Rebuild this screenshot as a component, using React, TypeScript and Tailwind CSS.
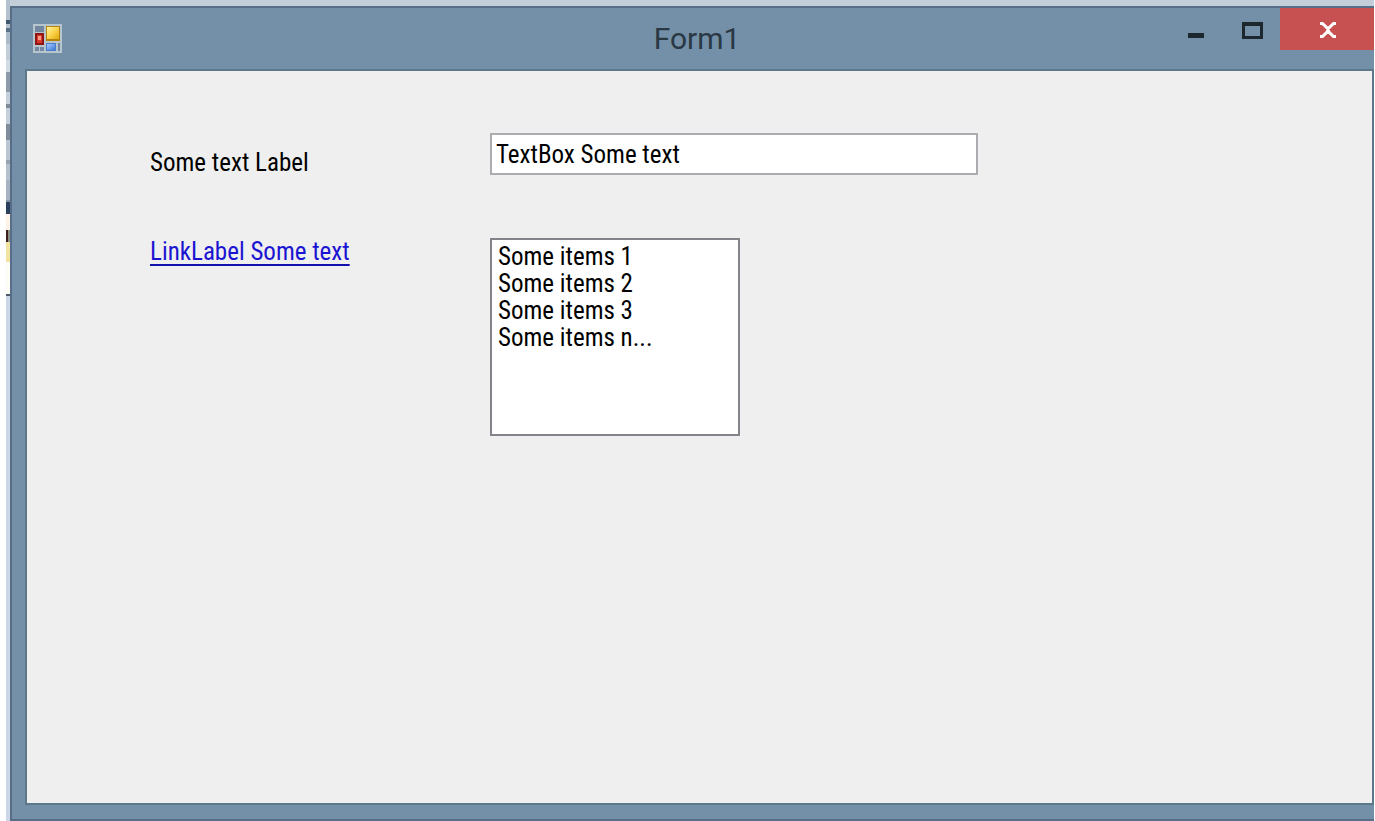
const items = ["Some items 1", "Some items 2", "Some items 3", "Some items n..."];

function BackgroundSliver() {
  return (
    <div aria-hidden="true" className="flex w-1 shrink-0 flex-col bg-[#cbd7e6]">
      <div className="h-5 bg-[#b4c2cf]" />
      <div className="h-1 bg-[#3f566c]" />
      <div className="h-1 bg-[#b4c2cf]" />
      <div className="h-1 bg-[#5b7186]" />
      <div className="h-3 bg-[#a9bac8]" />
      <div className="h-4 bg-[#c3ced9]" />
      <div className="h-3 bg-[#d2dae3]" />
      <div className="h-5 bg-[#8d9aaa]" />
      <div className="h-3 bg-[#c6cfda]" />
      <div className="h-1 bg-[#7f8b9a]" />
      <div className="h-4 bg-[#c6cfda]" />
      <div className="h-4 bg-[#7f8c9c]" />
      <div className="h-5 bg-[#bcc6d2]" />
      <div className="h-1 bg-[#98a3b1]" />
      <div className="h-4 bg-[#b5c0cd]" />
      <div className="h-5 bg-[#a7b3c2]" />
      <div className="h-[2px] bg-[#8894a6]" />
      <div className="h-3 bg-[#2b3f5f]" />
      <div className="h-4 bg-[#fdf3e6]" />
      <div className="flex h-3 bg-[#8a8f84]">
        <div className="w-[2px] bg-[#3a1d1c]" />
      </div>
      <div className="h-5 bg-[#f3e3a1]" />
      <div className="h-8 bg-[#fdfdf6]" />
      <div className="h-[2px] bg-[#4b5866]" />
    </div>
  );
}

function FormIcon() {
  return (
    <svg viewBox="0 0 29 29" className="size-[29px] shrink-0" aria-hidden="true">
      <defs>
        <linearGradient id="yellow" x1="0" y1="0" x2="1" y2="1">
          <stop offset="0" stopColor="#fff3a0" />
          <stop offset="0.5" stopColor="#fad44b" />
          <stop offset="1" stopColor="#e0a80c" />
        </linearGradient>
        <linearGradient id="blue" x1="0" y1="0" x2="1" y2="1">
          <stop offset="0" stopColor="#a6ccff" />
          <stop offset="1" stopColor="#3d78d8" />
        </linearGradient>
      </defs>
      <rect width="29" height="29" fill="#b7c6cc" />
      <rect x="2" y="2" width="9" height="6" fill="#7388a0" />
      <rect x="2" y="9" width="9" height="12" fill="#8f1414" />
      <rect x="4" y="11" width="5" height="8" fill="#d93a2c" />
      <rect x="5" y="12" width="3" height="4" fill="#ff9c84" />
      <rect x="2" y="23" width="4" height="4" fill="#7388a0" />
      <rect x="7" y="23" width="4" height="4" fill="#7388a0" />
      <rect x="13" y="2" width="14" height="15" fill="#b5830f" />
      <rect x="14" y="3" width="12" height="12" fill="url(#yellow)" />
      <rect x="13" y="19" width="10" height="8" fill="#4a7ccb" />
      <rect x="14" y="20" width="8" height="6" fill="url(#blue)" />
      <rect x="25" y="19" width="2" height="8" fill="#7388a0" />
    </svg>
  );
}

function TitleBar() {
  return (
    <header className="grid h-[61px] grid-cols-[1fr_auto_1fr]">
      <div className="flex items-center pl-[21px]">
        <FormIcon />
      </div>
      <h1 className="flex items-center pl-2 font-['Roboto',sans-serif] text-[30px] font-normal leading-none text-[#2a3844]">
        Form1
      </h1>
      <div className="flex items-start justify-end">
        <button type="button" aria-label="Minimize" className="flex h-11 w-14 items-center justify-center">
          <svg viewBox="0 0 16 18" className="h-[18px] w-4" aria-hidden="true">
            <rect y="12" width="16" height="5" fill="#1d272e" />
          </svg>
        </button>
        <button type="button" aria-label="Maximize" className="flex h-11 w-14 items-center justify-center">
          <svg viewBox="0 0 21 17" className="h-[17px] w-[21px]" aria-hidden="true">
            <path d="M0 0h21v17H0zM3 4v10h15V4z" fillRule="evenodd" fill="#1d272e" />
          </svg>
        </button>
        <button
          type="button"
          aria-label="Close"
          className="flex h-[42px] w-[94px] items-center justify-center bg-[#c75050] pl-[2px] pt-[2px]"
        >
          <svg viewBox="0 0 18 16" className="h-4 w-[18px]" aria-hidden="true">
            <path d="M1 1.5h2.5L9 6.8l5.500-5.300H17M1 14.500h2.500L9 9.200l5.500 5.300H17M7 8h4" fill="none" stroke="#fff" strokeWidth="3" />
          </svg>
        </button>
      </div>
    </header>
  );
}

export default function App() {
  return (
    <div className="flex min-h-screen bg-white pl-1.5 pr-px">
      <BackgroundSliver />
      <div className="flex grow flex-col bg-[#c3ced9] pt-1.5">
        <div className="flex grow flex-col border-y-2 border-l-2 border-[#586e88] bg-[#7390a8]">
          <TitleBar />
          <main className="mb-3.5 ml-[13px] grow border-2 border-[#5d7889] bg-[#efefef] font-['Roboto_Condensed','Roboto',sans-serif] text-[25px] leading-[27px] text-black">
            <form className="grid grid-cols-[340px_minmax(0,488px)] items-start gap-y-[62px] pl-[123px] pr-8 pt-[62px]">
              <label htmlFor="some-text" className="pt-4">
                Some text Label
              </label>
              <input
                id="some-text"
                type="text"
                defaultValue="TextBox Some text"
                className="h-[42px] w-full border-2 border-[#ababb0] bg-white px-1 outline-none"
              />
              <a
                href="#some-items"
                className="justify-self-start text-[#1a14d2] underline decoration-[#1410b0] decoration-2 underline-offset-4"
              >
                LinkLabel Some text
              </a>
              <select
                id="some-items"
                aria-label="Some items"
                multiple
                size={7}
                className="h-[198px] w-[250px] overflow-hidden border-2 border-[#838389] bg-white py-[2px] pl-1.5 outline-none"
              >
                {items.map((item) => (
                  <option key={item} className="h-[27px] min-h-0 p-0 leading-[27px]">
                    {item}
                  </option>
                ))}
              </select>
            </form>
          </main>
        </div>
      </div>
    </div>
  );
}
